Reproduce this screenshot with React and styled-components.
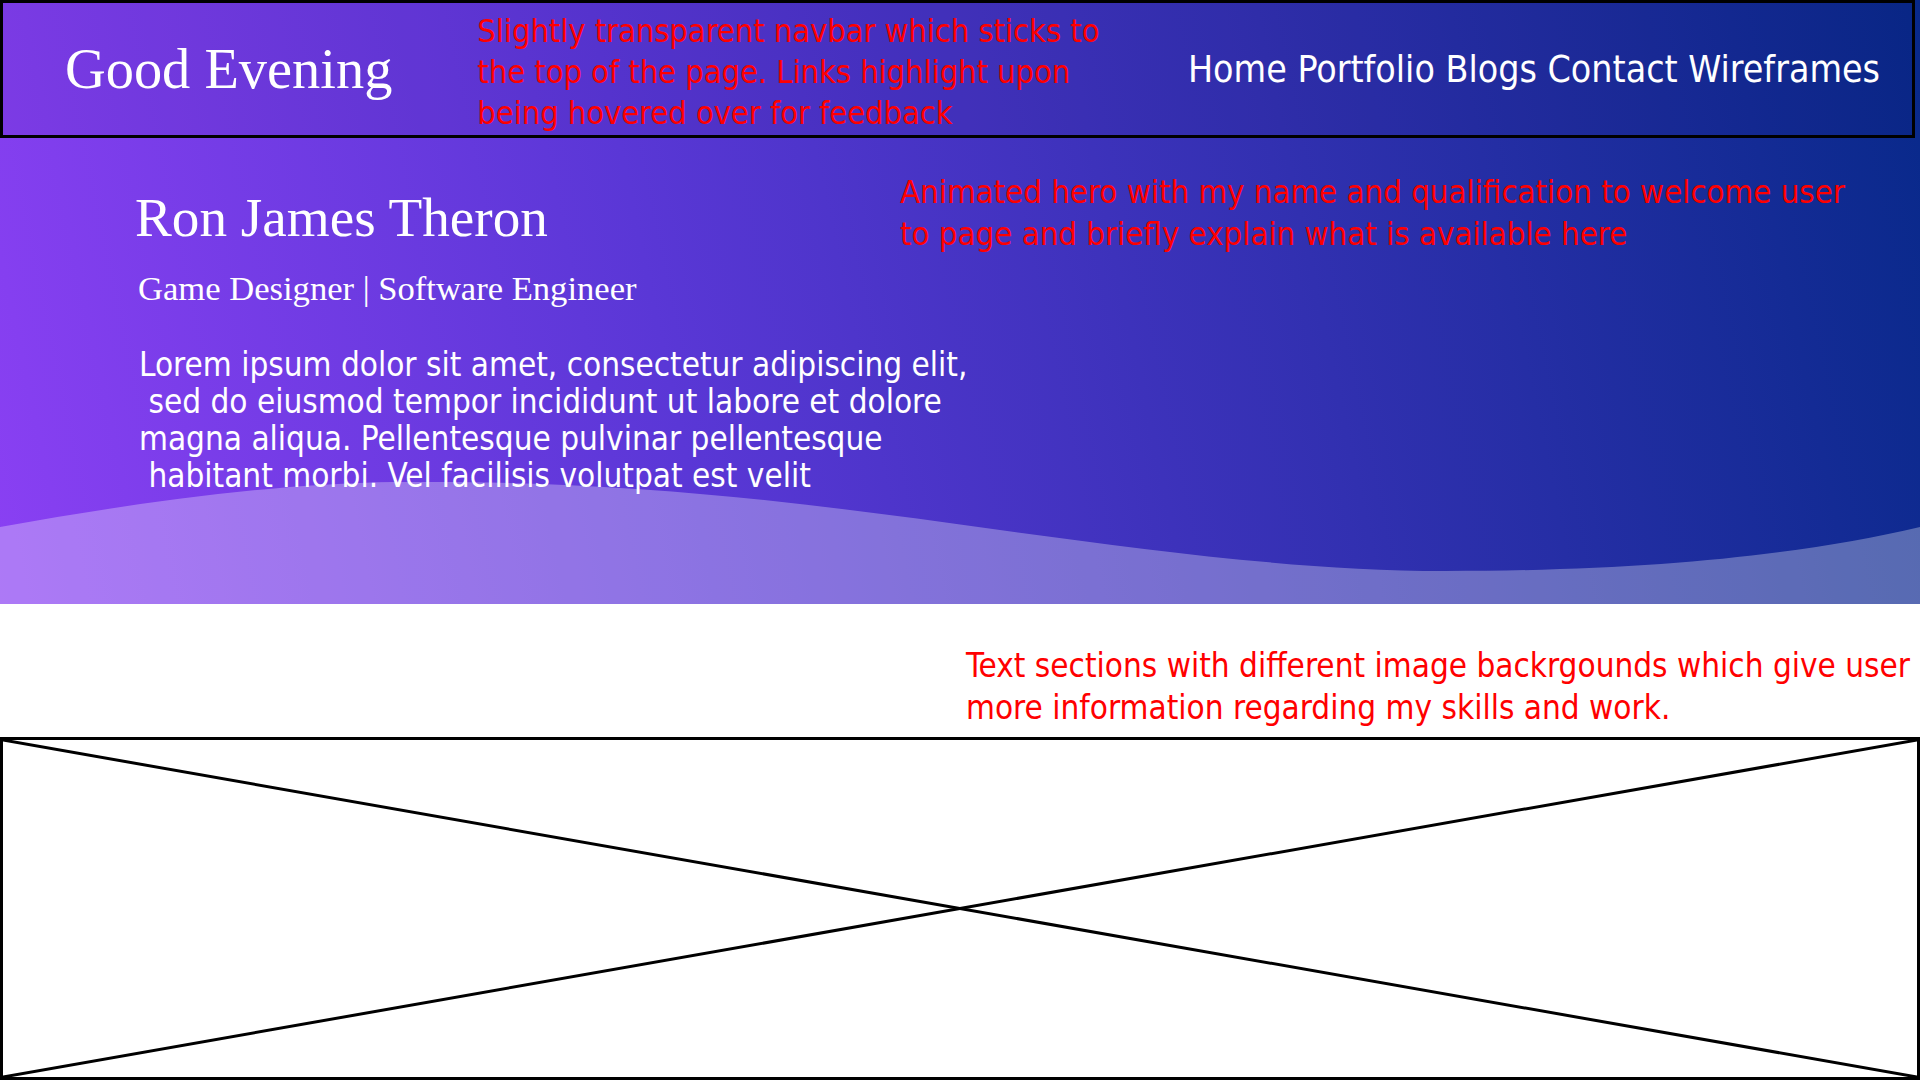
import React from "react";
import styled, { createGlobalStyle } from "styled-components";

const GlobalStyle = createGlobalStyle`
  html, body {
    margin: 0;
    padding: 0;
    background: #ffffff;
  }
  body {
    width: 1920px;
    height: 1080px;
    overflow: hidden;
    font-family: "DejaVu Sans Condensed", "DejaVu Sans", sans-serif;
  }
  *, *::before, *::after {
    box-sizing: border-box;
  }
`;

const Page = styled.div`
  display: flex;
  flex-direction: column;
  width: 1920px;
  height: 1080px;
  overflow: hidden;
`;

const Hero = styled.header`
  position: relative;
  flex: none;
  height: 604px;
  overflow: hidden;
  background: linear-gradient(78deg, #8a40f3 0%, #5a37d6 35%, #08298a 100%);
`;

const Wave = styled.svg`
  position: absolute;
  left: 0;
  bottom: 0;
  width: 1920px;
  height: 122px;
  display: block;
  z-index: 0;
`;

const Nav = styled.nav`
  position: sticky;
  top: 0;
  z-index: 2;
  display: flex;
  align-items: center;
  width: 1915px;
  height: 138px;
  padding: 0 32px 0 62px;
  border: 3px solid #000000;
  background: rgba(20, 8, 60, 0.06);
`;

const Brand = styled.div`
  font-family: "Liberation Serif", "Times New Roman", serif;
  font-size: 56.4px;
  color: #ffffff;
  white-space: nowrap;
`;

const Note = styled.div`
  font-family: "DejaVu Sans Condensed", "DejaVu Sans", sans-serif;
  font-size: ${(p) => p.$size || 33}px;
  line-height: ${(p) => p.$lh || 42}px;
  color: #ff0000;
  white-space: pre;
`;

const NavNote = styled(Note)`
  align-self: flex-start;
  margin: 8px 0 0 85px;
`;

const NavLinks = styled.div`
  margin-left: auto;
  font-size: 37.2px;
  color: #ffffff;
  white-space: nowrap;
`;

const NavLink = styled.a`
  color: #ffffff;
  text-decoration: none;
  &:hover {
    color: #ffd84d;
  }
`;

const HeroBody = styled.div`
  position: relative;
  z-index: 1;
  display: grid;
  grid-template-columns: 765px 1fr;
  align-items: start;
  padding: 33px 0 0 135px;
`;

const Intro = styled.div`
  display: flex;
  flex-direction: column;
`;

const Name = styled.h1`
  margin: 15px 0 0;
  font-family: "Liberation Serif", "Times New Roman", serif;
  font-weight: normal;
  font-size: 55.2px;
  line-height: 64px;
  color: #ffffff;
  white-space: nowrap;
`;

const Role = styled.h2`
  margin: 19px 0 0 3px;
  font-family: "Liberation Serif", "Times New Roman", serif;
  font-weight: normal;
  font-size: 34.6px;
  line-height: 39px;
  color: #ffffff;
  white-space: nowrap;
`;

const Bio = styled.p`
  margin: 38px 0 0 4px;
  font-family: "DejaVu Sans Condensed", "DejaVu Sans", sans-serif;
  font-size: 33px;
  line-height: 37px;
  color: #ffffff;
  white-space: pre;
`;

const Sections = styled.main`
  flex: none;
  display: flex;
  flex-direction: column;
  padding-top: 41px;
`;

const SectionNote = styled(Note)`
  margin-left: 966px;
`;

const Placeholder = styled.div`
  flex: none;
  height: 343px;
  margin-top: 8px;
  border: 3px solid #000000;
  background: #ffffff;
  overflow: hidden;
`;

const Cross = styled.svg`
  display: block;
  width: 100%;
  height: 100%;
`;

const links = ["Home", "Portfolio", "Blogs", "Contact", "Wireframes"];

export default function App() {
  return (
    <>
      <GlobalStyle />
      <Page>
        <Hero>
          <Nav>
            <Brand>Good Evening</Brand>
            <NavNote $size={32.3} $lh={41}>
              {"Slightly transparent navbar which sticks to\nthe top of the page. Links highlight upon\nbeing hovered over for feedback"}
            </NavNote>
            <NavLinks>
              {links.map((l, i) => (
                <React.Fragment key={l}>
                  {i > 0 ? " " : null}
                  <NavLink href="#">{l}</NavLink>
                </React.Fragment>
              ))}
            </NavLinks>
          </Nav>
          <HeroBody>
            <Intro>
              <Name>Ron James Theron</Name>
              <Role>Game Designer | Software Engineer</Role>
              <Bio>
                {"Lorem ipsum dolor sit amet, consectetur adipiscing elit,\n sed do eiusmod tempor incididunt ut labore et dolore\nmagna aliqua. Pellentesque pulvinar pellentesque\n habitant morbi. Vel facilisis volutpat est velit"}
              </Bio>
            </Intro>
            <Note $size={32.7}>
              {"Animated hero with my name and qualification to welcome user\nto page and briefly explain what is available here"}
            </Note>
          </HeroBody>
          <Wave viewBox="0 482 1920 122" preserveAspectRatio="none">
            <path
              d="M0 527 C 150 500, 300 480, 430 482 C 650 482, 820 505, 1000 530 C 1150 550, 1300 571, 1445 571 C 1650 571, 1800 555, 1920 527 L 1920 604 L 0 604 Z"
              fill="rgba(255,255,255,0.3)"
            />
          </Wave>
        </Hero>
        <Sections>
          <SectionNote $size={33}>
            {"Text sections with different image backrgounds which give user\nmore information regarding my skills and work."}
          </SectionNote>
          <Placeholder>
            <Cross viewBox="0 0 100 100" preserveAspectRatio="none">
              <line x1="0" y1="0" x2="100" y2="100" stroke="#000" strokeWidth="3" vectorEffect="non-scaling-stroke" />
              <line x1="0" y1="100" x2="100" y2="0" stroke="#000" strokeWidth="3" vectorEffect="non-scaling-stroke" />
            </Cross>
          </Placeholder>
        </Sections>
      </Page>
    </>
  );
}
